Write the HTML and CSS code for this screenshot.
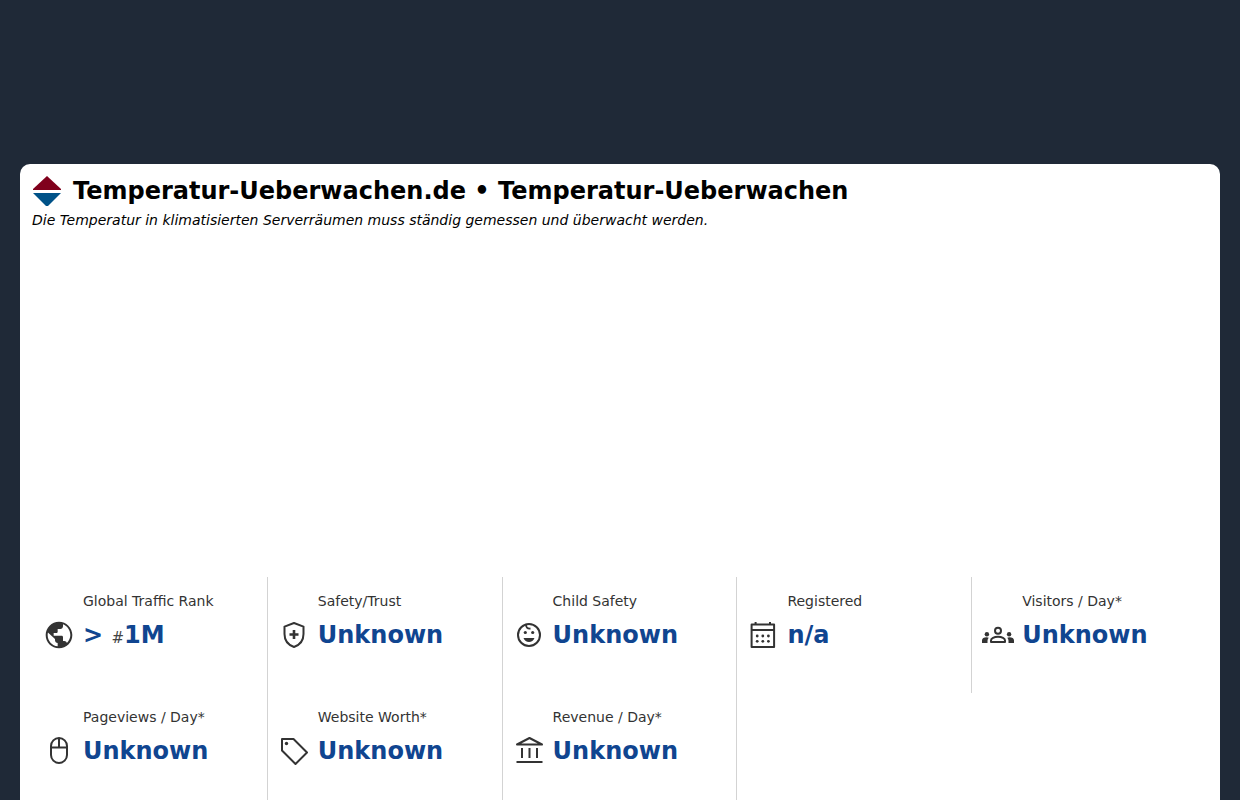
FILE: index.html
```html
<!DOCTYPE html>
<html lang="en">
<head>
<meta charset="UTF-8">
<meta name="viewport" content="width=device-width, initial-scale=1">
<title>Temperatur-Ueberwachen.de</title>
<link rel="stylesheet" href="styles.css">
</head>
<body>

<main class="card">
  <header class="site">
    <h1>
      <svg class="logo" viewBox="0 0 30 32" aria-hidden="true">
        <path fill="#80001c" d="M15 1L29 14v1H1v-1z"/>
        <path fill="#005288" d="M1 18h28L16 31h-2z"/>
      </svg>
      Temperatur-Ueberwachen.de • Temperatur-Ueberwachen
    </h1>
    <p class="description">Die Temperatur in klimatisierten Serverräumen muss ständig gemessen und überwacht werden.</p>
  </header>

  <section class="stats">
    <div class="stat">
      <h2>Global Traffic Rank</h2>
      <svg viewBox="0 0 24 24" aria-hidden="true"><path d="M12 2C6.480 2 2 6.480 2 12s4.480 10 10 10 10-4.480 10-10S17.520 2 12 2zm-1 18.500c-4.200-.49-7.500-4-7.500-8.500 0-.62.08-1.210.21-1.790L9 15v1c0 1.100.9 2 2 2v2.500zm6.900-2.540c-.26-.81-1-1.390-1.900-1.390h-1v-3c0-.55-.45-1-1-1H8v-2h2c.55 0 1-.45 1-1V7.500h2c1.100 0 2-.9 2-2v-1.500c3.200 1.190 5.500 4.500 5.500 8 0 2.200-1 4.300-2.600 5.960z"/></svg>
      <p>&gt; <small>#</small>1M</p>
    </div>
    <div class="stat">
      <h2>Safety/Trust</h2>
      <svg class="line" viewBox="0 0 32 32" aria-hidden="true"><path d="M16 4l9.500 3.600V15c0 6.200-3.800 11-9.500 13C10.300 26 6.500 21.200 6.500 15V7.600z"/><path d="M16 11v9M11.500 15.500h9" stroke-width="2.600"/></svg>
      <p>Unknown</p>
    </div>
    <div class="stat">
      <h2>Child Safety</h2>
      <svg class="line" viewBox="0 0 32 32" aria-hidden="true"><circle cx="16" cy="16" r="11"/><path d="M13 5c-.5 3 1.500 5 4.500 4.500" stroke-width="1.800"/><g class="solid"><circle cx="12.300" cy="13.500" r="1.600"/><circle cx="19.700" cy="13.500" r="1.600"/><path d="M10.500 19h11c-1 2.700-3 4-5.500 4s-4.500-1.300-5.500-4z"/></g></svg>
      <p>Unknown</p>
    </div>
    <div class="stat">
      <h2>Registered</h2>
      <svg class="line" viewBox="0 0 32 32" aria-hidden="true"><path d="M4.600 5.500h22.500v22.500h-22.500zM4.600 11h22.500M8.600 3v3M23 3v3"/><g class="solid"><circle cx="10.200" cy="17" r="1.400"/><circle cx="15.800" cy="17" r="1.400"/><circle cx="21.400" cy="17" r="1.400"/><circle cx="10.200" cy="22.300" r="1.400"/><circle cx="15.800" cy="22.300" r="1.400"/><circle cx="21.400" cy="22.300" r="1.400"/></g></svg>
      <p>n/a</p>
    </div>
    <div class="stat">
      <h2>Visitors / Day*</h2>
      <svg class="line" viewBox="0 0 32 32" aria-hidden="true"><circle cx="16" cy="11.700" r="3"/><path d="M9 23v-1.500c0-2 3-3.700 7-3.700s7 1.700 7 3.700V23z"/><g class="solid"><circle cx="4.900" cy="15.300" r="2.200"/><circle cx="27.100" cy="15.300" r="2.200"/><path d="M0 24v-2.500c0-2 2-3.200 4.500-3.200 1 0 1.700.2 2.200.4-.8 1-1.200 2-1.200 3V24zM32 24v-2.500c0-2-2-3.200-4.500-3.200-1 0-1.700.2-2.200.4.8 1 1.200 2 1.200 3V24z"/></g></svg>
      <p>Unknown</p>
    </div>
    <div class="stat">
      <h2>Pageviews / Day*</h2>
      <svg class="line" viewBox="0 0 32 32" aria-hidden="true"><rect x="8" y="3" width="16" height="25" rx="8"/><path d="M8 12.500h16M16 3v9.500"/></svg>
      <p>Unknown</p>
    </div>
    <div class="stat">
      <h2>Website Worth*</h2>
      <svg class="line" viewBox="0 0 32 32" aria-hidden="true"><path d="M4 4h11.500L29 17.500 17.500 29 4 15.500z"/><circle class="solid" cx="8.500" cy="8.500" r="1.700"/></svg>
      <p>Unknown</p>
    </div>
    <div class="stat">
      <h2>Revenue / Day*</h2>
      <svg class="line" viewBox="0 0 32 32" aria-hidden="true"><path d="M4 9.500L16.500 3 29 9.500zM3.500 27h26M9 13v10M16.500 13v10M24 13v10"/></svg>
      <p>Unknown</p>
    </div>
  </section>
</main>

</body>
</html>
```
FILE: styles.css
```css
* {
  box-sizing: border-box;
}
body {
  margin: 0;
  padding: 164px 20px 0;
  background: #1f2937;
  color: #000;
  font-family: "DejaVu Sans", sans-serif;
  font-size: 14px;
}
h1, h2, p {
  margin: 0;
}
.card {
  padding: 10px 12px 80px;
  background: #fff;
  border-radius: 10px;
}
.site {
  padding-bottom: 345px;
}
.site h1 {
  display: flex;
  align-items: center;
  gap: 11px;
  font-size: 24px;
  line-height: 34px;
}
.logo {
  width: 30px;
  height: 32px;
}
.description {
  font-style: italic;
  line-height: 24px;
}
.stats {
  display: grid;
  grid-template-columns: repeat(5, 1fr);
  margin: 0 1px;
}
.stat {
  display: grid;
  grid-template-columns: 32px 1fr;
  grid-template-rows: 16px 32px;
  column-gap: 8px;
  row-gap: 10px;
  align-items: center;
  padding: 16px 10px 42px;
  border-right: 1px solid #d3d3d3;
  color: #333;
}
.stat:nth-child(5n) {
  border-right: none;
}
.stat h2 {
  grid-column: 2;
  font-size: 14px;
  font-weight: normal;
  line-height: 16px;
}
.stat svg {
  width: 32px;
  height: 32px;
  fill: #333;
}
.stat svg.line {
  fill: none;
  stroke: #333;
  stroke-width: 2;
  stroke-linejoin: round;
}
.stat .solid {
  fill: #333;
  stroke: none;
}
.stat p {
  color: #104590;
  font-size: 24px;
  font-weight: bold;
  line-height: 32px;
}
.stat small {
  color: #444;
  font-size: 15px;
  font-weight: normal;
  line-height: 1;
}
```
